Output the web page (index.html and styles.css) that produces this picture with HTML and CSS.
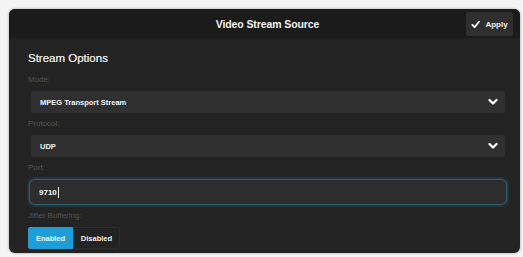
FILE: index.html
```html
<!DOCTYPE html>
<html>
<head>
<meta charset="utf-8">
<link rel="stylesheet" href="styles.css">
</head>
<body>
<div class="panel">
  <div class="header">
    <div class="title">Video Stream Source</div>
    <button class="apply"><svg class="check" viewBox="0 0 10 10" width="9" height="9"><path d="M1.5 5.5 L4 8 L8.8 2" fill="none" stroke="#fff" stroke-width="2" stroke-linecap="round" stroke-linejoin="round"/></svg>Apply</button>
  </div>
  <div class="body">
    <div class="section">Stream Options</div>
    <div class="label">Mode:</div>
    <div class="select"><span>MPEG Transport Stream</span><svg class="chev" viewBox="0 0 10 8" width="10" height="8"><path d="M1.5 2 L5 5.5 L8.5 2" fill="none" stroke="#fff" stroke-width="2.2" stroke-linecap="round" stroke-linejoin="round"/></svg></div>
    <div class="label">Protocol:</div>
    <div class="select"><span>UDP</span><svg class="chev" viewBox="0 0 10 8" width="10" height="8"><path d="M1.5 2 L5 5.5 L8.5 2" fill="none" stroke="#fff" stroke-width="2.2" stroke-linecap="round" stroke-linejoin="round"/></svg></div>
    <div class="label">Port:</div>
    <div class="input"><span>9710</span><span class="caret"></span></div>
    <div class="label">Jitter Buffering:</div>
    <div class="toggle">
      <div class="opt on">Enabled</div>
      <div class="opt">Disabled</div>
    </div>
  </div>
</div>
</body>
</html>
```
FILE: styles.css
```css
html, body {
  margin: 0;
  padding: 0;
  background: #f4f4f4;
}
body {
  width: 523px;
  height: 257px;
  overflow: hidden;
  font-family: "Liberation Sans", Arial, sans-serif;
  padding: 9px 3px 0 9px;
  box-sizing: border-box;
}
.panel {
  width: 511px;
  height: 244px;
  background: #232323;
  border-radius: 6px;
  overflow: hidden;
  box-shadow: 0 0 3px rgba(0,0,0,0.35);
}
.header {
  height: 29px;
  background: #1b1b1b;
  display: flex;
  align-items: center;
  justify-content: center;
  position: relative;
  border-bottom: 1px solid #202020;
}
.title {
  color: #f2f2f2;
  font-weight: bold;
  font-size: 10.5px;
  letter-spacing: -0.1px;
  margin-left: 6px;
}
.apply {
  position: absolute;
  right: 7px;
  top: 3px;
  height: 24px;
  width: 47px;
  background: #2f2f2f;
  border: none;
  border-radius: 2px;
  color: #f2f2f2;
  font-family: "Liberation Sans", Arial, sans-serif;
  font-size: 8px;
  font-weight: bold;
  display: flex;
  align-items: center;
  justify-content: center;
  gap: 5px;
  padding: 0;
}
.body {
  padding: 8px 15px 0 19px;
  display: flex;
  flex-direction: column;
}
.section {
  color: #e4e4e4;
  font-size: 11.5px;
  height: 22px;
  line-height: 22px;
  text-shadow: 0 0 0.4px #e4e4e4;
}
.label {
  color: #555;
  font-size: 8px;
  height: 10px;
  line-height: 10px;
  margin-top: 6px;
  margin-bottom: 6px;
}
.select {
  margin-left: 3px;
  height: 22px;
  background: #303030;
  border-radius: 2px;
  display: flex;
  align-items: center;
  justify-content: space-between;
  padding: 0 7px 0 9px;
  color: #f4f4f4;
  font-size: 7.5px;
  font-weight: bold;
}
.chev {
  display: block;
}
.input {
  margin-left: 1px;
  margin-right: -2px;
  height: 26px;
  box-sizing: border-box;
  background: #2d2d2d;
  border: 1px solid #2b6070;
  box-shadow: 0 0 3px 1px rgba(40,110,140,0.5);
  border-radius: 6px;
  display: flex;
  align-items: center;
  padding: 0 9px;
  color: #f4f4f4;
  font-size: 8px;
  font-weight: bold;
}
.caret {
  display: inline-block;
  width: 1px;
  height: 11px;
  background: #e8e8e8;
  margin-left: 1px;
}
.toggle {
  display: flex;
}
.opt {
  height: 22px;
  display: flex;
  align-items: center;
  justify-content: center;
  font-size: 7.5px;
  font-weight: bold;
  color: #f0f0f0;
  border: 1px solid #2e2e2e;
  box-sizing: border-box;
  border-radius: 0 2px 2px 0;
  width: 47px;
}
.opt.on {
  background: #1e9ed6;
  border-color: #1e9ed6;
  border-radius: 2px 0 0 2px;
  color: #e8f6ff;
  width: 45px;
}
```
